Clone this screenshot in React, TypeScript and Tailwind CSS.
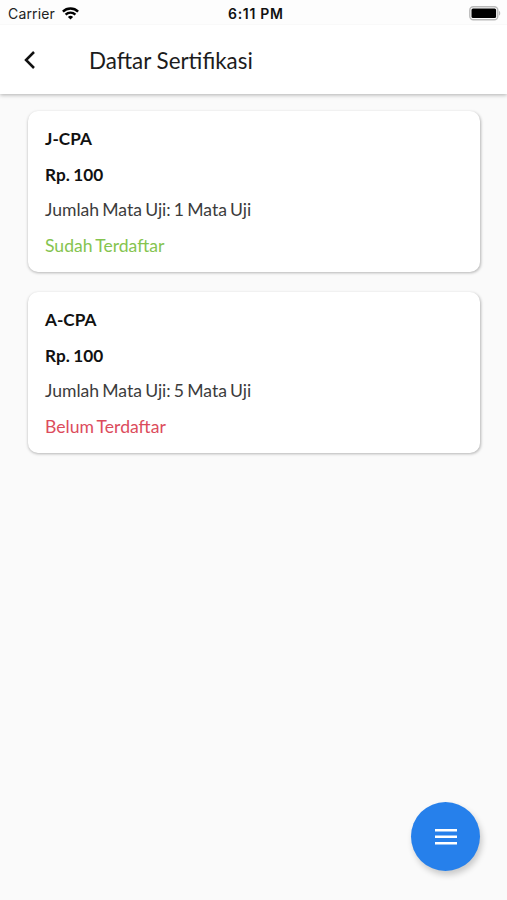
import React from 'react';

interface Certification {
  name: string;
  price: string;
  subjects: number;
  registered: boolean;
}

const certifications: Certification[] = [
  { name: 'J-CPA', price: 'Rp. 100', subjects: 1, registered: true },
  { name: 'A-CPA', price: 'Rp. 100', subjects: 5, registered: false },
];

const StatusBar: React.FC = () => (
  <div className="relative flex h-[25px] items-center justify-between border-b border-[#f9f9f9] bg-[#fdfdfd] pl-2 pr-1.5 pt-1 font-['Inter',sans-serif] text-[#222]">
    <div className="flex items-center gap-[7px]">
      <span className="text-[14px] leading-none tracking-[0.15px]">Carrier</span>
      <svg width="17" height="13" viewBox="0 0 17 13" fill="none" stroke="#000" strokeWidth="2.4" className="-mt-0.5">
        <path d="M.9 4.6a10.8 10.8 0 0 1 15.2 0" />
        <path d="M3.6 7.6a7 7 0 0 1 9.8 0" />
        <path d="M8.5 12.6 5.9 9.9a3.8 3.8 0 0 1 5.2 0z" fill="#000" stroke="none" />
      </svg>
    </div>
    <span className="absolute left-[228px] top-[7px] text-[14px] font-semibold leading-none tracking-[0.7px] text-[#111]">6:11 PM</span>
    <svg width="32" height="15" viewBox="0 0 32 15" className="-mt-px">
      <rect x="0.8" y="0.8" width="28" height="13" rx="3.5" fill="none" stroke="#b9b9b9" strokeWidth="1.4" />
      <rect x="2.5" y="2.5" width="24.6" height="9.6" rx="1.5" fill="#000" />
      <path d="M30.2 5c1.3.5 1.3 4.1 0 4.6z" fill="#aaa" />
    </svg>
  </div>
);

const CertificationCard: React.FC<{ item: Certification }> = ({ item }) => (
  <div className="h-[161px] rounded-[10px] bg-white px-[17px] pt-[10px] text-[17.6px] leading-[35.6px] text-[#3c3c3c] shadow-[0.5px_1px_3px_rgba(0,0,0,0.28)] [word-spacing:-1.4px]">
    <p className="text-[17.2px] font-bold text-[#111] [word-spacing:-0.6px]">{item.name}</p>
    <p className="text-[17.2px] font-bold text-[#111] [word-spacing:-0.6px]">{item.price}</p>
    <p>Jumlah Mata Uji: {item.subjects} Mata Uji</p>
    {item.registered ? (
      <p className="text-[#85c44f]">Sudah Terdaftar</p>
    ) : (
      <p className="text-[#dc4c5c]">Belum Terdaftar</p>
    )}
  </div>
);

export default function App() {
  return (
    <div className="relative h-[900px] w-[507px] overflow-hidden bg-[#fafafa] font-['Lato',sans-serif]">
      <StatusBar />

      {/* App bar */}
      <header className="flex h-[69px] items-center bg-white pl-[23px] shadow-[0_1px_4px_rgba(0,0,0,0.3)]">
        <svg width="14" height="20" viewBox="0 0 14 20" fill="none" stroke="#111" strokeWidth="2.5">
          <path d="M11 2 3 10l8 8" />
        </svg>
        <h1 className="ml-[52px] pt-0.5 text-[22.4px] text-[#1c1c1c]">Daftar Sertifikasi</h1>
      </header>

      <main className="flex flex-col gap-5 pl-7 pr-[27px] pt-[17px]">
        {certifications.map((item) => (
          <CertificationCard key={item.name} item={item} />
        ))}
      </main>

      {/* Floating menu button */}
      <button className="absolute left-[411px] top-[802px] flex h-[69px] w-[69px] items-center justify-center rounded-full bg-[#2680eb] shadow-[2px_4px_6px_rgba(0,0,0,0.2)]">
        <svg width="22" height="16" viewBox="0 0 22 16" fill="#fff">
          <path d="M0 0h22v2.6H0zM0 6.5h22v2.6H0zM0 13h22v2.6H0z" />
        </svg>
      </button>
    </div>
  );
}
